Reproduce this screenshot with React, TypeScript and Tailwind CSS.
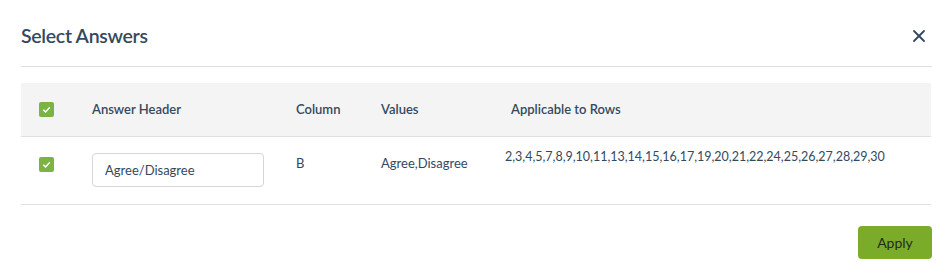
import { X } from "lucide-react";

const rows = "2,3,4,5,7,8,9,10,11,13,14,15,16,17,19,20,21,22,24,25,26,27,28,29,30";

function Check() {
  return (
    <span className="flex h-[15px] w-[15px] items-center justify-center rounded-[2px] bg-[#7cb342]">
      <svg viewBox="0 0 12 12" className="h-[11px] w-[11px]" fill="none" stroke="white" strokeWidth="1.6">
        <path d="M2.5 6.2 L5 8.6 L9.6 3.6" />
      </svg>
    </span>
  );
}

export default function App() {
  return (
    <div className="h-[274px] w-[948px] bg-white font-['Lato',sans-serif] text-[#34495e]">
      <div className="mx-[21px] mr-[16px] flex h-[67px] items-center justify-between border-b border-[#e0e0e0] pt-[5px]">
        <h2 className="text-[19.5px] font-semibold tracking-[-0.3px]">Select Answers</h2>
        <X className="mr-[3px] h-[20px] w-[20px] text-[#34495e]" strokeWidth={2.2} />
      </div>

      <div className="mx-[21px] mt-[16px] w-[910px]">
        <div className="flex h-[54px] items-center border-b border-[#e0e0e0] bg-[#f4f4f4] text-[13px] font-semibold">
          <div className="w-[71px] pl-[18px]">
            <Check />
          </div>
          <div className="w-[204px]">Answer Header</div>
          <div className="w-[85px]">Column</div>
          <div className="w-[130px]">Values</div>
          <div>Applicable to Rows</div>
        </div>

        <div className="flex h-[68px] items-start border-b border-[#e0e0e0] text-[13px]">
          <div className="w-[71px] pl-[18px] pt-[20px]">
            <Check />
          </div>
          <div className="w-[204px] pt-[16px]">
            <input
              readOnly
              value="Agree/Disagree"
              className="h-[34px] w-[172px] rounded-[4px] border border-[#d6d6d6] px-[12px] text-[13px] text-[#34495e] outline-none"
            />
          </div>
          <div className="w-[85px] pt-[17px]">B</div>
          <div className="w-[124px] pt-[17px]">Agree,Disagree</div>
          <div className="pt-[11px] text-[12.5px]">{rows}</div>
        </div>
      </div>

      <div className="mr-[16px] mt-[21px] flex justify-end">
        <button className="h-[33px] w-[74px] rounded-[4px] bg-[#7aac2a] text-[14px] text-[#1f2d1a]">Apply</button>
      </div>
    </div>
  );
}
